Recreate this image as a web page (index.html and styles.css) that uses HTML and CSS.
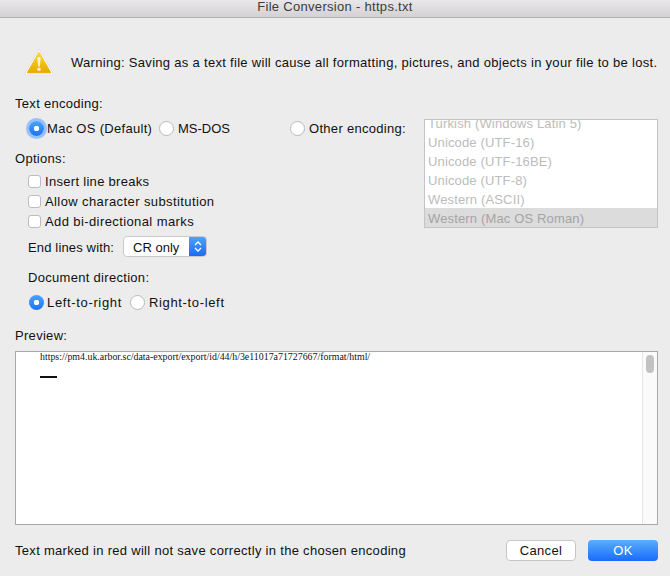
FILE: index.html
```html
<!DOCTYPE html>
<html lang="en">
<head>
  <meta charset="UTF-8" />
  <title>File Conversion - https.txt</title>
  <link rel="stylesheet" href="styles.css">
</head>
<body>
  <div class="titlebar">File Conversion - https.txt</div>

  <div class="content">
    <div class="warning">
      <svg class="warning-icon" width="30" height="28" viewBox="0 0 30 28">
        <defs>
          <linearGradient id="amber" x1="0" y1="0" x2="0" y2="1">
            <stop offset="0" stop-color="#fbd932"/>
            <stop offset="1" stop-color="#e9a800"/>
          </linearGradient>
        </defs>
        <path d="M15 1 L29 25 Q29.500 27 27.500 27 L2.500 27 Q0.500 27 1 25 Z" fill="#fff" stroke="#e0e0e0" stroke-width="1" stroke-linejoin="round"/>
        <path d="M15 4 L26.800 24.800 L3.200 24.800 Z" fill="url(#amber)" stroke="url(#amber)" stroke-linejoin="round"/>
        <path d="M13.300 9.500 Q15 8.300 16.700 9.500 L15.800 18.500 L14.200 18.500 Z" fill="#fff6d8"/>
        <circle cx="15" cy="21.300" r="1.700" fill="#fff6d8"/>
      </svg>
      <span class="txt">Warning: Saving as a text file will cause all formatting, pictures, and objects in your file to be lost.</span>
    </div>

    <div class="label encoding-label">Text encoding:</div>

    <div class="columns">
      <div class="left">
        <div class="radio-row">
          <span class="radio selected focused"></span><span class="radio-text txt mac">Mac OS (Default)</span>
          <span class="radio"></span><span class="radio-text txt dos">MS-DOS</span>
          <span class="radio"></span><span class="radio-text txt">Other encoding:</span>
        </div>

        <div class="label options-label">Options:</div>
        <div class="checks">
          <div class="check-row"><span class="checkbox"></span><span class="txt">Insert line breaks</span></div>
          <div class="check-row"><span class="checkbox"></span><span class="txt loose">Allow character substitution</span></div>
          <div class="check-row"><span class="checkbox"></span><span class="txt loose">Add bi-directional marks</span></div>
        </div>

        <div class="end-lines">
          <span class="txt end-label">End lines with:</span>
          <div class="popup">
            <span class="popup-value">CR only</span>
            <span class="popup-arrows">
              <svg width="8" height="13" viewBox="0 0 8 13">
                <path d="M1 5 L4 2 L7 5 M1 8 L4 11 L7 8" fill="none" stroke="#fff" stroke-width="1.300"/>
              </svg>
            </span>
          </div>
        </div>

        <div class="label direction-label">Document direction:</div>
        <div class="radio-row direction">
          <span class="radio selected"></span><span class="radio-text txt ltr">Left-to-right</span>
          <span class="radio"></span><span class="radio-text txt">Right-to-left</span>
        </div>
      </div>

      <div class="encoding-list">
        <div class="list-row">Turkish (Windows Latin 5)</div>
        <div class="list-row">Unicode (UTF-16)</div>
        <div class="list-row">Unicode (UTF-16BE)</div>
        <div class="list-row">Unicode (UTF-8)</div>
        <div class="list-row">Western (ASCII)</div>
        <div class="list-row current">Western (Mac OS Roman)</div>
      </div>
    </div>

    <div class="label preview-label">Preview:</div>
    <div class="preview">
      <div class="preview-text">
        <div class="preview-url">https://pm4.uk.arbor.sc/data-export/export/id/44/h/3e11017a71727667/format/html/</div>
        <div class="preview-dash"></div>
      </div>
      <div class="scrollbar"><div class="thumb"></div></div>
    </div>

    <div class="footer">
      <span class="footer-note">Text marked in red will not save correctly in the chosen encoding</span>
      <button class="btn">Cancel</button>
      <button class="btn primary">OK</button>
    </div>
  </div>
</body>
</html>
```

FILE: styles.css
```css
* {
  box-sizing: border-box;
}
body {
  margin: 0;
  width: 670px;
  height: 576px;
  overflow: hidden;
  background-color: #ececec;
  color: #111;
  font-family: "Liberation Sans", Arial, sans-serif;
  font-size: 13px;
  line-height: 16px;
  letter-spacing: 0.3px;
}

/* centred flex text sits 1px high otherwise */
.txt {
  padding-top: 2px;
}
.loose {
  letter-spacing: 0.4px;
}

.titlebar {
  height: 18px;
  line-height: 14px;
  text-align: center;
  color: #3c3c3c;
  background: linear-gradient(#e9e7e9, #d3d1d3);
  border-bottom: 1px solid #b1b1b1;
}

.content {
  padding: 0 12px 0 15px;
}

.warning {
  display: flex;
  align-items: center;
  height: 28px;
  margin-top: 30px;
  padding-left: 9px;
  gap: 17px;
  white-space: nowrap;
}
.warning-icon {
  flex: none;
}

.label {
  height: 16px;
  padding-top: 1px;
}
.encoding-label {
  margin-top: 19px;
}
.options-label {
  margin-top: 13px;
}
.direction-label {
  margin-top: 12px;
  margin-left: 13px;
}
.preview-label {
  margin-top: 16px;
}

.columns {
  display: flex;
  justify-content: space-between;
  margin-top: 8px;
}
.left {
  width: 409px;
}

.radio-row {
  display: flex;
  align-items: center;
  height: 18px;
  padding-left: 14px;
}
.radio {
  flex: none;
  width: 15px;
  height: 15px;
  border-radius: 50%;
  background-color: #fff;
  border: 1px solid #b9b9b9;
}
.radio.selected {
  border: none;
  background: radial-gradient(circle, #fff 0, #fff 2.5px, transparent 3px), linear-gradient(#4ba3fb, #1b73fa);
}
.radio.focused {
  box-shadow: 0 0 0 3px rgba(110, 170, 250, 0.65);
}
.radio-text {
  margin-left: 3px;
  white-space: nowrap;
}
.radio-text + .radio + .radio-text {
  margin-left: 4px;
}
.mac {
  width: 112px;
}
.radio-text.dos {
  width: 112px;
  letter-spacing: 0;
}
.direction {
  margin-top: 8px;
  letter-spacing: 0.65px;
}
.ltr {
  width: 83px;
}

.checks {
  margin-top: 5px;
}
.check-row {
  display: flex;
  align-items: center;
  height: 20px;
  padding-left: 13px;
}
.checkbox {
  flex: none;
  width: 13px;
  height: 13px;
  margin-right: 4px;
  background-color: #fff;
  border: 1px solid #bcbcbc;
  border-radius: 3px;
}

.end-lines {
  display: flex;
  align-items: center;
  height: 21px;
  margin-top: 5px;
  padding-left: 13px;
  gap: 9px;
}
.end-label {
  letter-spacing: 0.15px;
}
.popup {
  display: flex;
  width: 84px;
  height: 21px;
  background-color: #fff;
  border: 1px solid #c9c9c9;
  border-radius: 4px;
  overflow: hidden;
}
.popup-value {
  flex: 1;
  padding: 1px 0 0 9px;
  line-height: 19px;
  letter-spacing: 0;
}
.popup-arrows {
  display: flex;
  align-items: center;
  justify-content: center;
  width: 17px;
  background: linear-gradient(#4ba3fb, #1b6bfa);
}

.encoding-list {
  display: flex;
  flex-direction: column;
  justify-content: flex-end;
  width: 234px;
  height: 109px;
  overflow: hidden;
  background-color: #fff;
  border: 1px solid #c4c4c4;
  color: #bcbcbc;
  letter-spacing: 0.15px;
}
.list-row {
  flex: none;
  height: 19px;
  line-height: 19px;
  padding: 1px 0 0 3px;
}
.list-row.current {
  background-color: #dcdcdc;
  color: #a4a4a4;
}

.preview {
  display: flex;
  height: 174px;
  margin-top: 8px;
  background-color: #fff;
  border: 1px solid #a9a9a9;
}
.preview-text {
  flex: 1;
  padding-left: 24px;
}
.preview-url {
  height: 11px;
  font-family: "Liberation Serif", "Times New Roman", serif;
  font-size: 9.9px;
  line-height: 10px;
  letter-spacing: 0;
  color: #111;
}
.preview-dash {
  width: 17px;
  height: 2px;
  margin-top: 13px;
  background-color: #111;
}
.scrollbar {
  width: 15px;
  padding: 3px 3px 0 3px;
  background-color: #fafafa;
  border-left: 1px solid #e6e6e6;
}
.thumb {
  width: 8px;
  height: 18px;
  border-radius: 4px;
  background-color: #c2c2c2;
}

.footer {
  display: flex;
  align-items: center;
  height: 21px;
  margin-top: 15px;
}
.footer-note {
  flex: 1;
  white-space: nowrap;
}
.btn {
  width: 70px;
  height: 21px;
  padding: 0;
  background-color: #fff;
  border: 1px solid #c6c6c6;
  border-radius: 4px;
  color: #111;
  font-family: inherit;
  font-size: 13px;
  letter-spacing: 0.3px;
}
.btn.primary {
  margin-left: 12px;
  border: none;
  color: #fff;
  background: linear-gradient(#5aaefc, #1a6bfb);
}
```
